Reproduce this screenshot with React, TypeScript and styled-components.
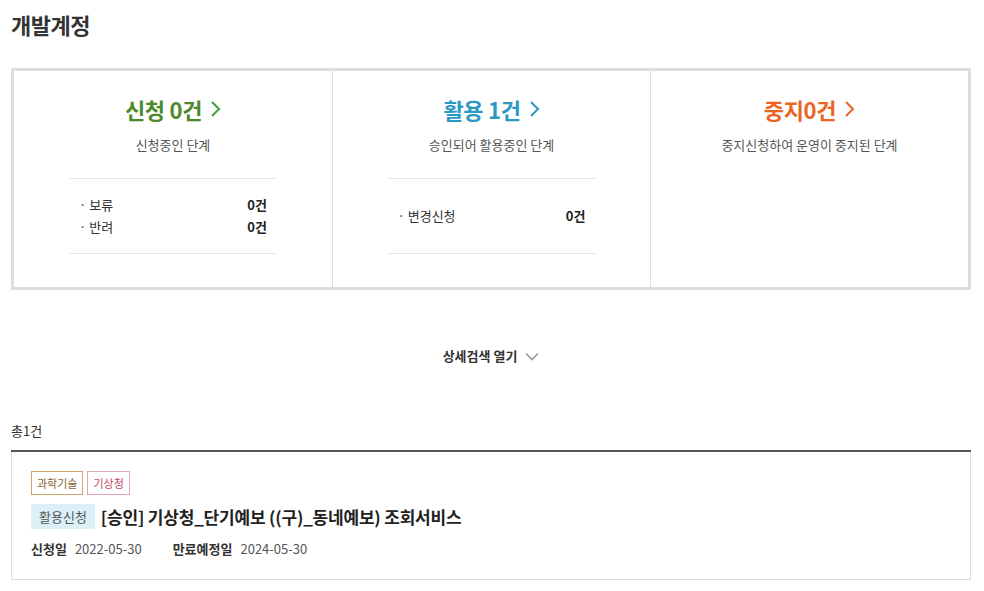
import React from 'react'
import styled, { createGlobalStyle } from 'styled-components'

const GlobalStyle = createGlobalStyle`
  body {
    margin: 0;
    background: #fff;
    font-family: 'Noto Sans CJK KR', 'Noto Sans', sans-serif;
    color: #333;
  }
`

type Tone = 'green' | 'blue' | 'orange'

const tones: Record<Tone, { text: string; arrow: string }> = {
  green: { text: '#4b8a2c', arrow: '#3ea23a' },
  blue: { text: '#2a9ac3', arrow: '#2a9ac3' },
  orange: { text: '#ec6424', arrow: '#ec6424' },
}

interface StatRow {
  label: string
  count: string
}

interface Stat {
  tone: Tone
  title: string
  desc: string
  rows?: StatRow[]
}

const stats: Stat[] = [
  {
    tone: 'green',
    title: '신청 0건',
    desc: '신청중인 단계',
    rows: [
      { label: '보류', count: '0건' },
      { label: '반려', count: '0건' },
    ],
  },
  {
    tone: 'blue',
    title: '활용 1건',
    desc: '승인되어 활용중인 단계',
    rows: [{ label: '변경신청', count: '0건' }],
  },
  {
    tone: 'orange',
    title: '중지0건',
    desc: '중지신청하여 운영이 중지된 단계',
  },
]

const Chevron = ({ color }: { color: string }) => (
  <svg width="11" height="18" viewBox="0 0 11 18" fill="none">
    <path d="M2 2l7 7-7 7" stroke={color} strokeWidth="2" />
  </svg>
)

const App: React.FC = () => {
  return (
    <>
      <GlobalStyle />
      <StyledPage>
        <StyledHeading>개발계정</StyledHeading>

        <StyledStats>
          {stats.map(stat => (
            <StyledStatCol key={stat.title}>
              <StyledStatTitle tone={stat.tone}>
                {stat.title}
                <Chevron color={tones[stat.tone].arrow} />
              </StyledStatTitle>
              <StyledStatDesc>{stat.desc}</StyledStatDesc>
              {stat.rows && (
                <StyledStatList>
                  {stat.rows.map(row => (
                    <StyledStatRow key={row.label}>
                      <span>· {row.label}</span>
                      <strong>{row.count}</strong>
                    </StyledStatRow>
                  ))}
                </StyledStatList>
              )}
            </StyledStatCol>
          ))}
        </StyledStats>

        <StyledSearchToggle>
          상세검색 열기
          <svg width="14" height="9" viewBox="0 0 14 9" fill="none">
            <path d="M1 1.5l6 6 6-6" stroke="#999" strokeWidth="1.6" />
          </svg>
        </StyledSearchToggle>

        <StyledTotal>총1건</StyledTotal>

        <StyledList>
          <StyledItem>
            <StyledTags>
              <StyledTag variant="field">과학기술</StyledTag>
              <StyledTag variant="org">기상청</StyledTag>
            </StyledTags>
            <StyledItemTitleRow>
              <StyledBadge>활용신청</StyledBadge>
              <StyledItemTitle>[승인] 기상청_단기예보 ((구)_동네예보) 조회서비스</StyledItemTitle>
            </StyledItemTitleRow>
            <StyledDates>
              <StyledDate>
                <strong>신청일</strong>
                <span>2022-05-30</span>
              </StyledDate>
              <StyledDate>
                <strong>만료예정일</strong>
                <span>2024-05-30</span>
              </StyledDate>
            </StyledDates>
          </StyledItem>
        </StyledList>
      </StyledPage>
    </>
  )
}

const StyledPage = styled.div`
  width: 960px;
  padding: 8px 0 10px 11px;
`

const StyledHeading = styled.h1`
  margin: 0;
  font-size: 22px;
  line-height: 32px;
  font-weight: 700;
  color: #333;
  letter-spacing: -0.5px;
`

const StyledStats = styled.div`
  margin-top: 28px;
  border: 3px solid #dedede;
  display: grid;
  grid-template-columns: repeat(3, 1fr);
  height: 216px;
`

const StyledStatCol = styled.div`
  display: flex;
  flex-direction: column;
  align-items: center;
  padding-top: 23px;
  & + & {
    border-left: 1px solid #dedede;
  }
`

const StyledStatTitle = styled.div<{ tone: Tone }>`
  display: flex;
  align-items: center;
  gap: 8px;
  font-size: 22px;
  line-height: 30px;
  font-weight: 700;
  letter-spacing: -0.3px;
  color: ${props => tones[props.tone].text};
`

const StyledStatDesc = styled.div`
  margin-top: 12px;
  font-size: 13px;
  line-height: 18px;
  color: #555;
`

const StyledStatList = styled.div`
  margin-top: 24px;
  width: 208px;
  height: 76px;
  border-top: 1px solid #e8e8e8;
  border-bottom: 1px solid #e8e8e8;
  display: flex;
  flex-direction: column;
  justify-content: center;
  padding: 0 10px;
  box-sizing: border-box;
`

const StyledStatRow = styled.div`
  display: flex;
  justify-content: space-between;
  font-size: 13px;
  line-height: 22px;
  color: #333;
  strong {
    font-weight: 700;
    color: #222;
  }
`

const StyledSearchToggle = styled.div`
  margin-top: 57px;
  display: flex;
  justify-content: center;
  align-items: center;
  gap: 8px;
  font-size: 13px;
  line-height: 18px;
  font-weight: 700;
  color: #333;
`

const StyledTotal = styled.div`
  margin-top: 57px;
  font-size: 13px;
  line-height: 18px;
  color: #333;
`

const StyledList = styled.div`
  margin-top: 10px;
  border-top: 2px solid #555;
`

const StyledItem = styled.div`
  border: 1px solid #ddd;
  border-top: none;
  padding: 19px 19px 21px;
`

const StyledTags = styled.div`
  display: flex;
  gap: 4px;
`

const StyledTag = styled.span<{ variant: 'field' | 'org' }>`
  display: inline-flex;
  align-items: center;
  height: 24px;
  padding: 0 5px;
  box-sizing: border-box;
  font-size: 11px;
  border: 1px solid ${props => (props.variant === 'field' ? '#cfa670' : '#e5a4b4')};
  color: ${props => (props.variant === 'field' ? '#8a6530' : '#c24866')};
`

const StyledItemTitleRow = styled.div`
  margin-top: 9px;
  display: flex;
  align-items: center;
  gap: 6px;
`

const StyledBadge = styled.span`
  display: inline-flex;
  align-items: center;
  height: 25px;
  padding: 0 8px;
  background: #dcf0f8;
  font-size: 13px;
  color: #555;
`

const StyledItemTitle = styled.div`
  font-size: 17px;
  line-height: 24px;
  font-weight: 700;
  color: #222;
  letter-spacing: -0.2px;
`

const StyledDates = styled.div`
  margin-top: 11px;
  display: flex;
  gap: 31px;
  font-size: 13px;
  line-height: 18px;
`

const StyledDate = styled.div`
  display: flex;
  gap: 8px;
  strong {
    font-weight: 700;
    color: #333;
  }
  span {
    color: #555;
  }
`

export default App
